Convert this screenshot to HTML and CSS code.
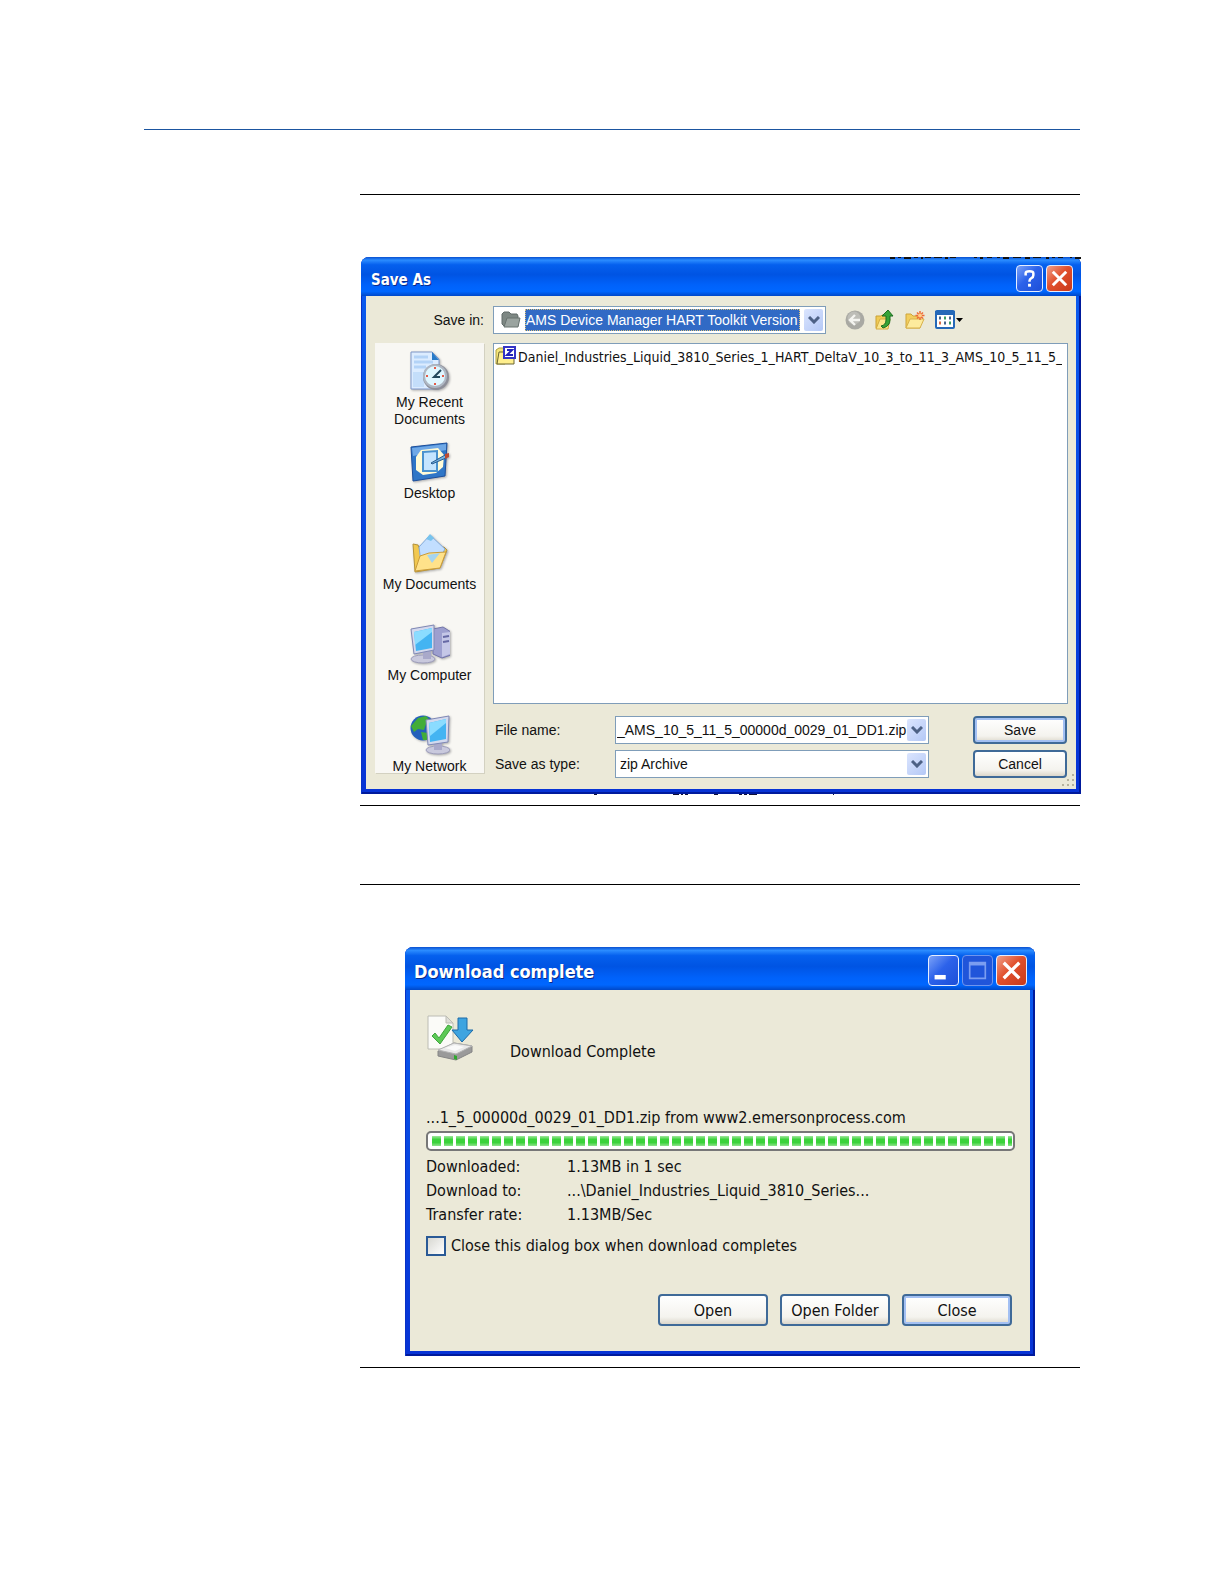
FILE: index.html
```html
<!DOCTYPE html>
<html lang="en">
<head>
  <meta charset="UTF-8">
  <title>Save and Download</title>
  <link rel="stylesheet" href="styles.css">
</head>
<body>
  <main class="page">
    <section class="figure">
      <div class="window save-window">
        <svg class="specks specks-top" viewBox="0 0 192 3" aria-hidden="true">
          <path d="M1 1h5M9 0h3M15 1h7M25 0h4M32 1h2M36 0h6M45 0h8M56 1h3M61 0h6M85 0h3M91 1h3M98 0h5M108 0h3M114 1h6M124 0h8M136 1h5M144 0h8M157 1h3M163 0h3M169 0h5M181 0h2M186 1h6" stroke="#111" stroke-width="2"/>
        </svg>
        <header class="titlebar">
          <h2>Save As</h2>
          <button class="tb-btn" aria-label="Help">
            <svg viewBox="0 0 26 26"><path d="M9 10V7.500q0-2 4-2t4 2v2q0 2-2 3t-2 3v1" fill="none" stroke="#fff" stroke-width="2.600"/><path d="M11.500 18.500h3v3h-3z" fill="#fff"/></svg>
          </button>
          <button class="tb-btn close" aria-label="Close">
            <svg viewBox="0 0 26 26"><path d="M6 6l14 14M20 6L6 20" stroke="#fff" stroke-width="3"/></svg>
          </button>
        </header>

        <div class="save-body">
          <label class="save-in" for="saveIn">Save in:</label>
          <div class="top-row">
            <div class="combo folder-combo">
              <svg class="combo-icon" viewBox="0 0 20 18"><path d="M1 3l2-2h5l2 2h6l1 2v10H3L1 13z" fill="#7d8783" stroke="#616b68"/><path d="M3 16L6 7h13l-2 9z" fill="#9aa39f" stroke="#68726f"/></svg>
              <select id="saveIn"><option>AMS Device Manager HART Toolkit Version</option></select>
              <span class="arrow"><svg viewBox="0 0 12 8"><path d="M1 1l5 5 5-5" fill="none" stroke="#4d6185" stroke-width="3"/></svg></span>
            </div>
            <div class="tools">
              <button class="tool" aria-label="Back">
                <svg viewBox="0 0 20 20"><circle cx="10" cy="10" r="9.500" fill="#a9a9a3"/><circle cx="9" cy="8" r="6.500" fill="#bdbdb7"/><path d="M15 10H6M10 5l-5 5 5 5" fill="none" stroke="#f4f4f0" stroke-width="2.400"/></svg>
              </button>
              <button class="tool" aria-label="Up one level">
                <svg viewBox="0 0 20 20"><path d="M1 6h5l1-1h5v13H1z" fill="#f0cb55" stroke="#c9a137"/><path d="M1 19l4-10h10l-2 10z" fill="#fbe68c" stroke="#d4ac42"/><path d="M6 16q5-1 5-6V6H7l6-6 5 6h-3v4q0 6-7 8z" fill="#36a336" stroke="#1d6d20"/></svg>
              </button>
              <button class="tool" aria-label="New folder">
                <svg viewBox="0 0 20 20"><path d="M1 4h5l2 2h7v12H1z" fill="#f2ce5e" stroke="#cda43b"/><path d="M1 18l4-9h14l-4 9z" fill="#fdeb9d" stroke="#d8b14a"/><path d="M15 1v9M10.500 5.500h9M12 2.500l6 6M18 2.500l-6 6" stroke="#ee6a35" stroke-width="1.500"/><circle cx="15" cy="5.500" r="2" fill="#ffce87"/></svg>
              </button>
              <button class="tool views" aria-label="View menu">
                <svg viewBox="0 0 28 20"><rect x="1" y="1" width="18" height="17" rx="1" fill="#fff" stroke="#2468b8" stroke-width="2"/><path d="M0 3h20" stroke="#2468b8" stroke-width="4"/><path d="M4 8h2M14 8h2M9 13h2" stroke="#45638b" stroke-width="3"/><path d="M9 8h2M14 13h2" stroke="#3a9c63" stroke-width="3"/><path d="M4 13h2" stroke="#d66b47" stroke-width="3"/><path d="M21 8h7l-3.500 4z" fill="#000"/></svg>
              </button>
            </div>
          </div>

          <nav class="places">
            <button class="place">
              <svg viewBox="0 0 40 40">
                <path d="M1 1h21l7 7v30H1z" fill="#dcecff" stroke="#8098c8"/><path d="M22 1v8h7z" fill="#287ac8"/><path d="M4 6h14M4 11h19M4 16h12" stroke="#b3d3f7" stroke-width="3"/><path d="M3 21h11v15H3z" fill="#c4defa"/>
                <circle cx="26" cy="26" r="13" fill="#8d8f99"/><circle cx="25" cy="25" r="12" fill="#aeb7c3"/><circle cx="25" cy="25" r="10" fill="#dff6ff"/><path d="M25 16v2M25 32v2M16 25h2M32 25h2" stroke="#e45b48" stroke-width="2"/><path d="M31 19l-7 7h6" fill="none" stroke="#24485c" stroke-width="2"/>
              </svg>
              <span>My Recent Documents</span>
            </button>
            <button class="place">
              <svg viewBox="0 0 40 40">
                <path d="M1 5L37 1l-2 33-32 5z" fill="#2f76c7" stroke="#1c4f9c"/><path d="M2 6l34-4v6L3 14z" fill="#6fa8e6"/><path d="M11 8l17-2 6 7-1 12-7 6-13 2-7-5V15z" fill="#fffbd8"/><path d="M13 10l14-1v20H13z" fill="#c4e5ff" stroke="#4992cf" stroke-width="2"/><path d="M21 21l14-8 1 3-14 6z" fill="#74b1df" stroke="#265b90"/><path d="M35 12l4-1v4l-4 2z" fill="#bd4931"/>
              </svg>
              <span>Desktop</span>
            </button>
            <button class="place">
              <svg viewBox="0 0 40 40">
                <path d="M3 11l5 1 2 5 24-3 3 3-7 18-25 4z" fill="#f2c84f" stroke="#b5933a"/><path d="M9 14L20 2l15 14-10 17-14-3z" fill="#c2deff" stroke="#83aad9"/><path d="M20 1l4 4-3 3-5-2z" fill="#78c4ee"/><path d="M5 38l5-15 9-3 17-1-6 16z" fill="#ffe28a" stroke="#c99b3a"/><path d="M17 22l13-2-8 10z" fill="#a5d4ef"/>
              </svg>
              <span>My Documents</span>
            </button>
            <button class="place">
              <svg viewBox="0 0 40 40">
                <path d="M23 5l10-2 8 5v23l-9 3-9-4z" fill="#9d9fcf" stroke="#7476aa"/><path d="M32 9l8-1v22l-8 3z" fill="#c5c7e7"/><path d="M33 13l6-1M33 18l6-1" stroke="#6668a4" stroke-width="2"/>
                <ellipse cx="13" cy="35" rx="12" ry="4" fill="#c9c9dd" stroke="#9d9dbb"/><path d="M13 26h8v9h-8z" fill="#a9a9ca"/><path d="M1 5l23-4v25L4 30z" fill="#d3d9ee" stroke="#8088b5"/><path d="M4 8l18-4v20L6 27z" fill="#44b4f2"/><path d="M4 8l18-4v4L5 21z" fill="#8bdcff"/>
              </svg>
              <span>My Computer</span>
            </button>
            <button class="place">
              <svg viewBox="0 0 40 40">
                <circle cx="13" cy="13" r="12.500" fill="#2460bb"/><path d="M8 3l8-2 5 5-5 3-2 6-6-1-4 3-3-6zM11 17l7 1-1 7h-4z" fill="#42ad38"/>
                <ellipse cx="28" cy="35" rx="12" ry="4" fill="#c9c9dd" stroke="#9d9dbb"/><path d="M24 26h8v9h-8z" fill="#a9a9ca"/><path d="M16 5l23-4-1 26-20 3z" fill="#d3d9ee" stroke="#8088b5"/><path d="M19 8l17-4v20l-16 3z" fill="#44b4f2"/><path d="M19 8l17-4v4L20 21z" fill="#8bdcff"/>
              </svg>
              <span>My Network</span>
            </button>
          </nav>

          <div class="save-main">
            <div class="file-list">
              <svg class="zip-icon" viewBox="0 0 21 19"><path d="M1 4l3-2h6v16H1z" fill="#f4e57b" stroke="#b0a13d"/><path d="M4 6h15v12H2z" fill="#ffef8d" stroke="#6b6432"/><rect x="9" y="1" width="11" height="11" fill="#fff" stroke="#3434c6" stroke-width="2"/><path d="M12 4h5l-5 5h6" fill="none" stroke="#2222bb" stroke-width="2"/></svg>
              <span class="file-name">Daniel_Industries_Liquid_3810_Series_1_HART_DeltaV_10_3_to_11_3_AMS_10_5_11_5_</span>
            </div>
            <div class="field">
              <label for="fileName">File name:</label>
              <div class="combo name-combo">
                <input type="text" id="fileName" value="_AMS_10_5_11_5_00000d_0029_01_DD1.zip">
                <button class="arrow" aria-label="Recent names"><svg viewBox="0 0 12 8"><path d="M1 1l5 5 5-5" fill="none" stroke="#4d6185" stroke-width="3"/></svg></button>
              </div>
              <button class="xp-btn default">Save</button>
            </div>
            <div class="field">
              <label for="saveType">Save as type:</label>
              <div class="combo">
                <select id="saveType"><option>zip Archive</option></select>
                <span class="arrow"><svg viewBox="0 0 12 8"><path d="M1 1l5 5 5-5" fill="none" stroke="#4d6185" stroke-width="3"/></svg></span>
              </div>
              <button class="xp-btn">Cancel</button>
            </div>
          </div>
        </div>
        <svg class="grip" viewBox="0 0 14 14" aria-hidden="true"><path d="M11 1h2M6 6h2M11 6h2M1 11h2M6 11h2M11 11h2" stroke="#b5b29d" stroke-width="2"/></svg>
        <svg class="specks specks-bottom" viewBox="0 0 250 2" aria-hidden="true"><path d="M0 0h3M79 0h6M87 0h2M91 0h3M120 0h4M145 0h3M150 0h3M155 0h8M239 0h1" stroke="#113" stroke-width="2"/></svg>
      </div>
    </section>

    <section class="figure">
      <div class="window download-window">
        <header class="titlebar">
          <h2>Download complete</h2>
          <button class="tb-btn" aria-label="Minimize">
            <svg viewBox="0 0 26 26"><path d="M5 17h10v4H5z" fill="#fff"/></svg>
          </button>
          <button class="tb-btn" aria-label="Maximize" disabled>
            <svg viewBox="0 0 26 26"><path d="M6 6h14v14H6z" fill="none" stroke="#7b9df0" stroke-width="1.500"/><path d="M6 7h14" stroke="#7b9df0" stroke-width="3"/></svg>
          </button>
          <button class="tb-btn close" aria-label="Close">
            <svg viewBox="0 0 26 26"><path d="M6 6l14 14M20 6L6 20" stroke="#fff" stroke-width="3"/></svg>
          </button>
        </header>

        <div class="download-body">
          <div class="headline">
            <svg class="done-icon" viewBox="0 0 48 48">
              <path d="M2 2h18l7 7v26H2z" fill="#fbfbf8" stroke="#bcbcb4"/><path d="M20 2v7h7z" fill="#deded8" stroke="#bcbcb4"/><path d="M6 22l3-3 4 5 9-13 4 2-12 17z" fill="#5cc956" stroke="#3fa53d"/>
              <path d="M32 4h9v12h6L36 28 26 16h6z" fill="#3ea4e0" stroke="#1d6ba8"/>
              <path d="M12 37l16-8 18 3v6L30 46l-18-4z" fill="#9a9a9a" stroke="#858585"/><path d="M12 36l16-7 18 3-16 8z" fill="#e9e9e9" stroke="#b4b4b4"/><path d="M19 34l10-3 9 2-9 4z" fill="#fafafa"/><path d="M28 41l3 1v4l-3-1z" fill="#2ea82e"/>
            </svg>
            <p>Download Complete</p>
          </div>
          <label class="source" for="progress">...1_5_00000d_0029_01_DD1.zip from www2.emersonprocess.com</label>
          <progress id="progress" class="progress" value="100" max="100"></progress>
          <dl class="details">
            <dt>Downloaded:</dt>
            <dd>1.13MB in 1 sec</dd>
            <dt>Download to:</dt>
            <dd>...\Daniel_Industries_Liquid_3810_Series...</dd>
            <dt>Transfer rate:</dt>
            <dd>1.13MB/Sec</dd>
          </dl>
          <label class="check">
            <input type="checkbox">
            Close this dialog box when download completes
          </label>
          <div class="actions">
            <button class="xp-btn">Open</button>
            <button class="xp-btn">Open Folder</button>
            <button class="xp-btn default">Close</button>
          </div>
        </div>
      </div>
    </section>
  </main>
</body>
</html>
```

FILE: styles.css
```css
* {
  box-sizing: border-box;
}

body {
  margin: 0;
  background: #fff;
  color: #111;
  font-family: "Liberation Sans", Arial, sans-serif;
  font-size: 14px;
}

button,
input,
select {
  font: inherit;
  color: inherit;
}

svg {
  display: block;
}

.page {
  margin: 129px 144px 0;
  border-top: 1px solid #1b55a0;
}

.figure {
  margin: 64px 0 0 216px;
  padding: 62px 0 11px;
  border-top: 1px solid #000;
  border-bottom: 1px solid #000;
}

.figure + .figure {
  margin-top: 78px;
}

/* windows */
.window {
  position: relative;
  background: linear-gradient(#0a5cf0, #0733d5);
  border-radius: 8px 8px 0 0;
  padding: 0 5px 5px;
  box-shadow: inset 1px 0 #0831c5, inset -2px -2px #001a9c;
}

.titlebar {
  display: flex;
  align-items: center;
  gap: 3px;
  height: 39px;
  margin: 0 -5px;
  padding: 4px 8px 0 10px;
  border-radius: 8px 8px 0 0;
  background: linear-gradient(#0a50d0 0, #2b8cff 8%, #0560ee 20%, #0054e3 45%, #0062fb 72%, #0067ff 88%, #0048c8 100%);
}

.titlebar h2 {
  flex: 1;
  margin: 0;
  padding-top: 2px;
  color: #fff;
  font-family: "DejaVu Sans Condensed", "DejaVu Sans", sans-serif;
  font-size: 15px;
  font-weight: bold;
  text-shadow: 1px 1px #0a2a8a;
}

.tb-btn {
  width: 27px;
  height: 27px;
  padding: 0;
  border: 1px solid #e6eeff;
  border-radius: 4px;
  background: linear-gradient(135deg, #7ba2f8, #2c62ea 45%, #1d4fd8);
}

.tb-btn.close {
  background: linear-gradient(135deg, #f0a08a, #e1502d 45%, #c8391a);
}

.tb-btn:disabled {
  border-color: #6f95ee;
  background: #2055da;
}

.combo {
  display: flex;
  align-items: center;
  height: 28px;
  padding: 2px;
  border: 1px solid #7f9db9;
  background: #fff;
}

.combo select,
.combo input {
  flex: 1;
  min-width: 0;
  height: 22px;
  padding: 0 2px;
  border: 0;
  outline: 0;
  background: none;
  appearance: none;
}

.combo.name-combo {
  padding-left: 1px;
}

.combo.name-combo input {
  padding: 0;
}

.arrow {
  display: grid;
  place-items: center;
  width: 19px;
  height: 22px;
  padding: 0;
  border: 0;
  border-radius: 2px;
  background: linear-gradient(135deg, #dbe5fe, #b4c8f6);
  pointer-events: none;
}

.arrow svg {
  width: 12px;
  height: 8px;
}

.xp-btn {
  height: 28px;
  padding: 0 4px;
  border: 2px solid #3f6a98;
  border-radius: 4px;
  background: linear-gradient(#fff, #f4f3ee 75%, #dcd7cb);
}

.xp-btn.default {
  box-shadow: inset 0 0 0 2px #a3c0f3;
}

/* Save As */
.save-window {
  margin: 0 -1px 0 1px;
}

.save-body {
  display: grid;
  grid-template-columns: 109px 1fr;
  gap: 9px;
  padding: 10px 8px 11px 9px;
  background: #ebe9d8;
}

.save-in {
  align-self: center;
  text-align: right;
}

.top-row {
  display: flex;
  gap: 19px;
}

.folder-combo {
  width: 333px;
}

.combo-icon {
  width: 20px;
  height: 18px;
  margin: 0 4px 0 5px;
}

.folder-combo select {
  padding: 0;
  border: 1px dotted #d9c17a;
  background: #316ac5;
  color: #fff;
}

.folder-combo .arrow {
  margin-left: 4px;
}

.tools {
  display: flex;
  align-items: center;
  gap: 10px;
}

.tool {
  width: 20px;
  height: 20px;
  padding: 0;
  border: 0;
  background: none;
}

.tool.views {
  width: 28px;
}

.places {
  display: grid;
  grid-template-rows: repeat(4, 91px) 58px;
  align-content: start;
  align-self: start;
  padding-top: 8px;
  background: #f8f7f3;
  box-shadow: 1px 1px #d3d1c1;
}

.place {
  display: flex;
  flex-direction: column;
  align-items: center;
  gap: 3px;
  padding: 0;
  border: 0;
  background: none;
  line-height: 17px;
}

.place svg {
  flex: none;
  width: 40px;
  height: 40px;
  filter: drop-shadow(1px 1px 1px #aaa);
}

.place span {
  max-width: 94px;
}

.save-main {
  display: flex;
  flex-direction: column;
  gap: 6px;
  min-width: 0;
}

.file-list {
  display: flex;
  align-items: flex-start;
  gap: 2px;
  height: 361px;
  margin-bottom: 6px;
  padding: 2px 1px;
  border: 1px solid #7f9db9;
  background: #fff;
}

.zip-icon {
  flex: none;
  width: 21px;
  height: 19px;
}

.file-name {
  overflow: hidden;
  font-family: "DejaVu Sans Condensed", "DejaVu Sans", sans-serif;
  font-size: 14px;
  line-height: 22px;
  white-space: nowrap;
}

.field {
  display: grid;
  grid-template-columns: 120px 314px 1fr 94px;
  align-items: center;
  padding: 0 1px 0 2px;
}

.field .xp-btn {
  grid-column: 4;
}

.grip {
  position: absolute;
  right: 6px;
  bottom: 6px;
  width: 14px;
  height: 14px;
}

/* bits of the page behind the window that show at its edges */
.specks {
  position: absolute;
}

.specks-top {
  top: 0;
  right: 0;
  width: 192px;
  height: 3px;
}

.specks-bottom {
  left: 233px;
  bottom: -2px;
  width: 250px;
  height: 2px;
}

/* Download complete */
.download-window {
  margin: 0 45px;
}

.download-window .titlebar {
  height: 43px;
  padding-left: 9px;
}

.download-window .titlebar h2 {
  font-size: 18px;
}

.download-window .tb-btn {
  width: 31px;
  height: 31px;
}

.download-body {
  padding: 24px 15px 25px 16px;
  background: #ebe9d8;
  font-family: "DejaVu Sans Condensed", "DejaVu Sans", sans-serif;
  font-size: 16px;
}

.headline {
  display: flex;
  align-items: flex-end;
  gap: 36px;
}

.headline p {
  margin: 0;
  line-height: 20px;
}

.done-icon {
  width: 48px;
  height: 48px;
}

.source {
  display: block;
  margin: 44px 0 1px;
  line-height: 24px;
}

.progress {
  display: block;
  width: 100%;
  height: 20px;
  margin-bottom: 4px;
  padding: 3px 1px 3px 4px;
  border: 2px solid #777;
  border-radius: 5px;
  background: #fff;
  appearance: none;
}

.progress::-webkit-progress-bar {
  background: #fff;
}

.progress::-webkit-progress-value {
  background:
    repeating-linear-gradient(90deg, transparent 0 9px, #fff 9px 12px),
    linear-gradient(#9fe79c, #3bd23b 35%, #3bd23b 65%, #8fe28c);
}

.details {
  display: grid;
  grid-template-columns: 141px 1fr;
  margin: 0;
  line-height: 24px;
}

.details dd {
  margin: 0;
}

.check {
  display: flex;
  align-items: center;
  gap: 5px;
  margin-top: 9px;
  line-height: 20px;
}

.check input {
  width: 20px;
  height: 20px;
  margin: 0;
  border: 2px solid #2a5a96;
  background: linear-gradient(135deg, #d8d8d2, #fff);
  appearance: none;
}

.actions {
  display: flex;
  justify-content: flex-end;
  gap: 12px;
  margin-top: 38px;
  padding-right: 3px;
}

.actions .xp-btn {
  width: 110px;
  height: 32px;
}
```
